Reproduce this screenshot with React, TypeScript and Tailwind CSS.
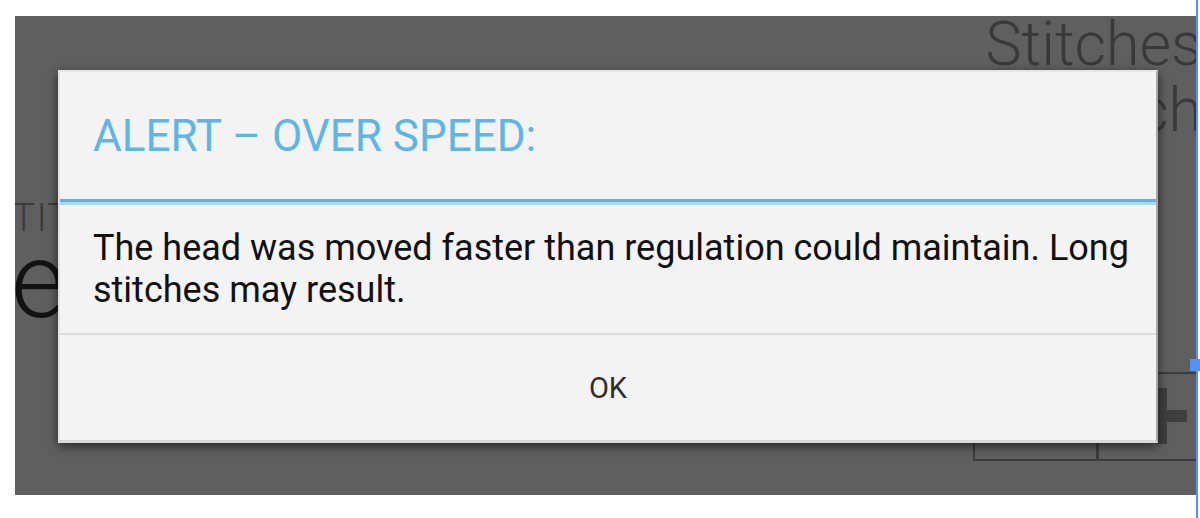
export default function App() {
    return (
        <div className="relative w-[1200px] h-[518px] bg-white overflow-hidden font-['Roboto','Liberation_Sans',sans-serif]">
            {/* captured screen, dimmed by the dialog's overlay */}
            <div className="relative ml-[15px] mt-[16px] w-[1181px] h-[479px] bg-[#5f5f5f] overflow-hidden pl-[43px] pt-[54px]">
                {/* dimmed content behind the dialog */}
                <div className="absolute right-[-6px] top-[-5px] text-right text-[61px] font-light leading-[66px] text-[#393939] whitespace-nowrap">
                    <div>Stitches</div>
                    <div>per inch</div>
                </div>
                <div className="absolute left-[-27px] top-[173px] text-[39px] font-light tracking-[1px] text-[#3b3b3b] whitespace-nowrap">
                    STITCH
                </div>
                <div className="absolute left-[-60px] top-[200px] text-[106px] font-light leading-[130px] text-[#121212]">
                    Le
                </div>
                <div className="absolute left-[958px] top-[356px] w-[260px] h-[89px] border-2 border-[#3c3c3c] flex">
                    <div className="w-[124px] border-r-[3px] border-[#3c3c3c]" />
                </div>
                <div className="absolute left-[1120px] top-[394px] w-[52px] h-[12px] bg-[#3e3e3e]" />
                <div className="absolute left-[1141px] top-[372px] w-[11px] h-[56px] bg-[#3e3e3e]" />

                {/* dialog */}
                <div className="relative w-[1100px] h-[373px] bg-[#f3f3f3] border-l-2 border-t-2 border-r-2 border-b-[3px] border-l-[#e2e2e2] border-t-[#e6e6e6] border-r-[#a8a8a8] border-b-[#dadada] shadow-[0_3px_10px_rgba(0,0,0,0.6)] flex flex-col">
                    <div className="h-[127px] pl-[33px] pt-[40px]">
                        <h2 className="text-[44px] leading-[48px] text-[#5db6e4] whitespace-nowrap">
                            ALERT – OVER SPEED:
                        </h2>
                    </div>
                    <div className="h-[3px] bg-[#5ab3e1]" />
                    <div className="h-[3px] bg-[#aad8ee]" />
                    <div className="h-[128px] pl-[33px] pt-[22px]">
                        <p className="text-[36px] leading-[42px] text-[#111111] w-[1060px]">
                            The head was moved faster than regulation could maintain. Long stitches may result.
                        </p>
                    </div>
                    <div className="h-[2px] bg-[#dadada]" />
                    <button className="flex-1 flex justify-center pt-[37px] text-[29px] leading-[32px] text-[#2e2e2e]">
                        OK
                    </button>
                </div>
            </div>

            {/* editor selection guide */}
            <div className="absolute left-[1196px] top-0 w-[2px] h-[518px] bg-[#4d94ff]" />
            <div className="absolute left-[1190px] top-[359px] w-[10px] h-[12px] bg-[#4d94ff]" />
        </div>
    );
}
